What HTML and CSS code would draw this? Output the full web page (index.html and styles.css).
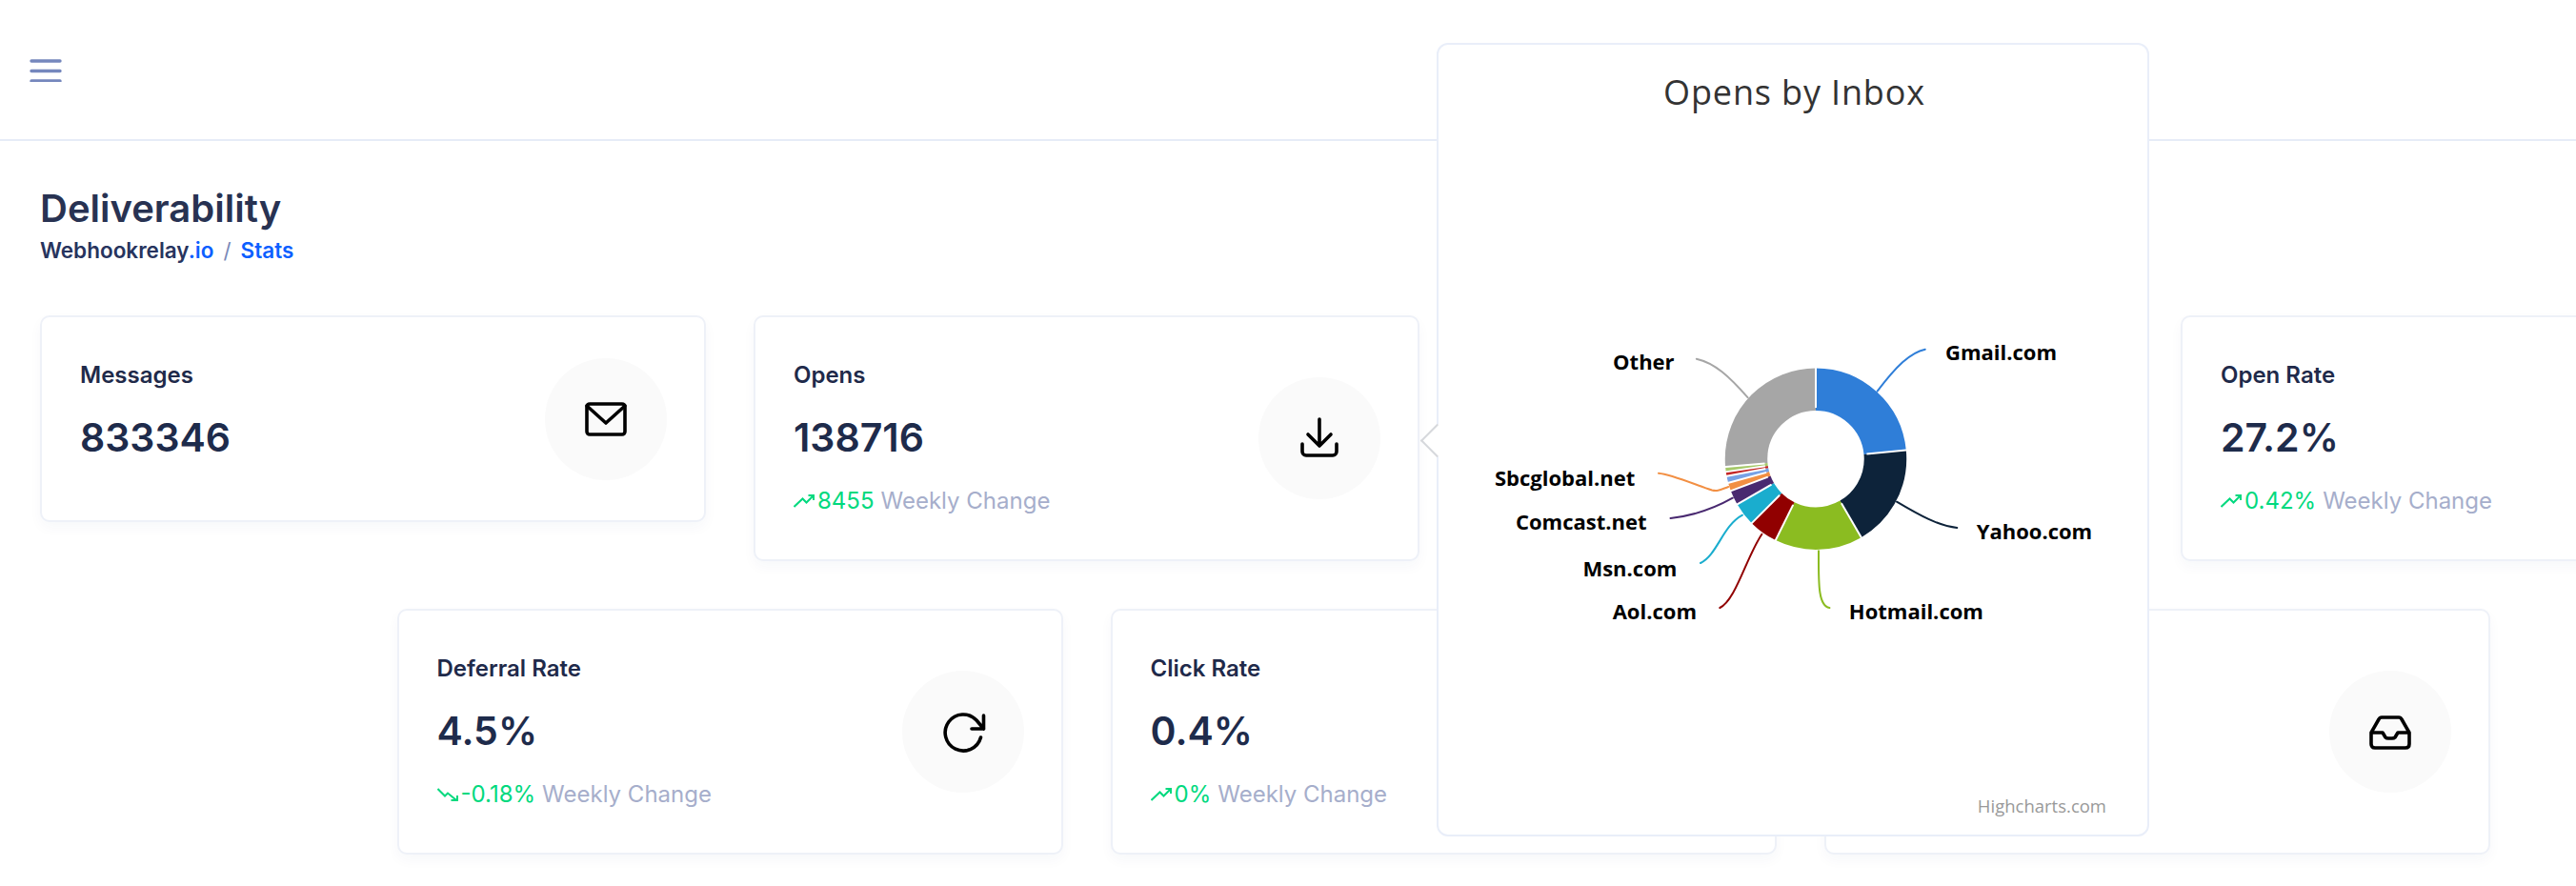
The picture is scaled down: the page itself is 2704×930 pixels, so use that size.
FILE: index.html
```html
<!DOCTYPE html>
<html lang="en">
<head>
<meta charset="utf-8">
<title>Deliverability</title>
<link rel="stylesheet" href="styles.css">
</head>
<body>
<header class="topbar">
  <svg class="menu" viewBox="0 0 34 24"><path d="M2 2H32M2 12.500H32M2 23H32"/></svg>
</header>
<main class="page">
  <h1 class="title">Deliverability</h1>
  <nav class="crumbs"><span class="crumb-dark">Webhookrelay<span class="crumb-blue">.io</span></span><span class="crumb-sep">/</span><span class="crumb-blue">Stats</span></nav>
  <section class="cards">
    <article class="card">
      <div class="body">
        <div class="label">Messages</div>
        <div class="value">833346</div>
      </div>
      <div class="disc"><svg class="ico" viewBox="0 0 48 48"><rect x="4" y="8" width="40" height="32" rx="3"/><path d="M4 10L24 28L44 10"/></svg></div>
    </article>
    <article class="card">
      <div class="body">
        <div class="label">Opens</div>
        <div class="value">138716</div>
        <div class="change"><svg class="trend" viewBox="0 0 22 14"><path d="M.5 13L9.500 4.500L13.500 8.500L20.500 1.500M15.500 1H21V6"/></svg><span class="delta">8455</span><span class="note">Weekly Change</span></div>
      </div>
      <div class="disc"><svg class="ico" viewBox="0 0 48 48"><path d="M24 4V32M12 20L24 32L36 20M6 30V38A4 4 0 0 0 10 42H38A4 4 0 0 0 42 38V30"/></svg></div>
    </article>
    <article class="card card-tall" aria-hidden="true"></article>
    <article class="card">
      <div class="body">
        <div class="label">Open Rate</div>
        <div class="value">27.2%</div>
        <div class="change"><svg class="trend" viewBox="0 0 22 14"><path d="M.5 13L9.500 4.500L13.500 8.500L20.500 1.500M15.500 1H21V6"/></svg><span class="delta">0.42%</span><span class="note">Weekly Change</span></div>
      </div>
    </article>
    <article class="card">
      <div class="body">
        <div class="label">Deferral Rate</div>
        <div class="value">4.5%</div>
        <div class="change"><svg class="trend" viewBox="0 0 22 14"><path d="M.5 1L8 8.500L11 5.500L19.500 12.500M14.500 13H21V8"/></svg><span class="delta">-0.18%</span><span class="note">Weekly Change</span></div>
      </div>
      <div class="disc"><svg class="ico" viewBox="0 0 48 48"><path d="M42.500 30A19 19 0 1 1 38 12L45.500 21M45.500 7V21H33"/></svg></div>
    </article>
    <article class="card">
      <div class="body">
        <div class="label">Click Rate</div>
        <div class="value">0.4%</div>
        <div class="change"><svg class="trend" viewBox="0 0 22 14"><path d="M.5 13L9.500 4.500L13.500 8.500L20.500 1.500M15.500 1H21V6"/></svg><span class="delta">0%</span><span class="note">Weekly Change</span></div>
      </div>
    </article>
    <article class="card card-end">
      <div class="disc"><svg class="ico" viewBox="0 0 48 48"><path d="M4 25L12 11Q13 9 15 9H33Q35 9 36 11L44 25V37Q44 41 40 41H8Q4 41 4 37ZM4 25H16L19 30Q20 31 22 31H26Q28 31 29 30L32 25H44"/></svg></div>
    </article>
  </section>
</main>
<aside class="popover">
  <svg class="chart" viewBox="1510 47 744 829">
    <text class="chart-title" x="1883.500" y="110">Opens by Inbox</text>
    <g class="links">
      <path class="c1" d="M1970.600 410.700C1990 385 2005 370 2020.800 366.700"/>
      <path class="c2" d="M1991 526.700C2015 541 2035 552 2054.300 554"/>
      <path class="c3" d="M1909 578.300C1909 610 1908 636 1920.400 638"/>
      <path class="c4" d="M1849.400 560.700C1833 585 1822 630 1805.300 638"/>
      <path class="c5" d="M1829 540.700C1808 552 1803 582 1785 591"/>
      <path class="c6" d="M1818.800 522.700C1797 535 1772 542 1753.500 544"/>
      <path class="c7" d="M1814.300 511C1806 514 1803 516 1797 514.500C1780 509 1755 498 1741 496.700"/>
      <path class="c8" d="M1834.700 417.300C1815 395 1800 381 1780.800 376.700"/>
    </g>
    <g class="ring" transform="rotate(-90 1906 481.700)">
      <circle class="c1" cx="1906" cy="481.700" r="73" pathLength="360" stroke-dasharray="84.500 360" stroke-dashoffset="0"/>
      <circle class="c2" cx="1906" cy="481.700" r="73" pathLength="360" stroke-dasharray="65.400 360" stroke-dashoffset="-84.500"/>
      <circle class="c3" cx="1906" cy="481.700" r="73" pathLength="360" stroke-dasharray="56.400 360" stroke-dashoffset="-149.900"/>
      <circle class="c4" cx="1906" cy="481.700" r="73" pathLength="360" stroke-dasharray="18.600 360" stroke-dashoffset="-206.300"/>
      <circle class="c5" cx="1906" cy="481.700" r="73" pathLength="360" stroke-dasharray="15.100 360" stroke-dashoffset="-224.900"/>
      <circle class="c6" cx="1906" cy="481.700" r="73" pathLength="360" stroke-dasharray="9.400 360" stroke-dashoffset="-240"/>
      <circle class="c7" cx="1906" cy="481.700" r="73" pathLength="360" stroke-dasharray="5.300 360" stroke-dashoffset="-249.400"/>
      <circle class="c9" cx="1906" cy="481.700" r="73" pathLength="360" stroke-dasharray="4.300 360" stroke-dashoffset="-254.700"/>
      <circle class="c10" cx="1906" cy="481.700" r="73" pathLength="360" stroke-dasharray="2.800 360" stroke-dashoffset="-259"/>
      <circle class="c11" cx="1906" cy="481.700" r="73" pathLength="360" stroke-dasharray="3.200 360" stroke-dashoffset="-261.800"/>
      <circle class="c8" cx="1906" cy="481.700" r="73" pathLength="360" stroke-dasharray="95 360" stroke-dashoffset="-265"/>
    </g>
    <g class="seams">
      <line x1="1906" y1="428" x2="1906" y2="384" transform="rotate(0 1906 481.700)"/>
      <line x1="1906" y1="428" x2="1906" y2="384" transform="rotate(84.500 1906 481.700)"/>
      <line x1="1906" y1="428" x2="1906" y2="384" transform="rotate(149.900 1906 481.700)"/>
      <line x1="1906" y1="428" x2="1906" y2="384" transform="rotate(206.300 1906 481.700)"/>
      <line x1="1906" y1="428" x2="1906" y2="384" transform="rotate(224.900 1906 481.700)"/>
      <line x1="1906" y1="428" x2="1906" y2="384" transform="rotate(240 1906 481.700)"/>
      <line x1="1906" y1="428" x2="1906" y2="384" transform="rotate(249.400 1906 481.700)"/>
      <line x1="1906" y1="428" x2="1906" y2="384" transform="rotate(254.700 1906 481.700)"/>
      <line x1="1906" y1="428" x2="1906" y2="384" transform="rotate(259 1906 481.700)"/>
      <line x1="1906" y1="428" x2="1906" y2="384" transform="rotate(261.800 1906 481.700)"/>
      <line x1="1906" y1="428" x2="1906" y2="384" transform="rotate(265 1906 481.700)"/>
    </g>
    <g class="labels">
      <text x="2042" y="377.500">Gmail.com</text>
      <text x="2074.700" y="565.500">Yahoo.com</text>
      <text x="1940.800" y="650">Hotmail.com</text>
      <text class="end" x="1781" y="650">Aol.com</text>
      <text class="end" x="1760.400" y="604.500">Msn.com</text>
      <text class="end" x="1728.600" y="556">Comcast.net</text>
      <text class="end" x="1716.300" y="510">Sbcglobal.net</text>
      <text class="end" x="1757.600" y="388">Other</text>
    </g>
    <text class="credit" x="2211" y="852.500">Highcharts.com</text>
  </svg>
</aside>
</body>
</html>
```

FILE: styles.css
```css
* { box-sizing: border-box; }

html, body {
  margin: 0;
  height: 100%;
  overflow: hidden;
  background: #fff;
}

body {
  position: relative;
  font-family: Inter, "Liberation Sans", sans-serif;
}

.topbar {
  height: 148px;
  border-bottom: 2px solid #e6ecf7;
  display: flex;
  align-items: flex-start;
  padding: 62px 0 0 31px;
}

.menu {
  width: 34px;
  height: 24px;
  fill: none;
  stroke: #7587bd;
  stroke-width: 3.4;
  stroke-linecap: round;
}

.page {
  padding: 47px 0 0 42px;
  width: 3000px;
}

.title {
  margin: 0;
  font-size: 40px;
  line-height: 48px;
  font-weight: 600;
  color: #283252;
}

.crumbs {
  display: flex;
  margin-top: 4px;
  font-size: 22.500px;
  line-height: 32px;
  font-weight: 600;
}

.crumb-dark { color: #27345e; }
.crumb-blue { color: #0d5fff; }
.crumb-sep { color: #7a89b8; margin: 0 10px; font-weight: 400; }

.cards {
  display: flex;
  flex-wrap: wrap;
  justify-content: center;
  align-items: flex-start;
  gap: 50px;
  width: 2946px;
  margin-top: 52px;
}

.card {
  width: 699px;
  min-height: 217px;
  display: flex;
  align-items: center;
  justify-content: space-between;
  padding: 0 39px 0 40px;
  background: #fff;
  border: 2px solid #eef1f8;
  border-radius: 10px;
  box-shadow: 0 6px 14px rgba(30, 50, 100, .035);
}

.card-tall { height: 258px; }
.card-end { height: 258px; justify-content: flex-end; }

.body {
  align-self: flex-start;
  padding: 45px 0;
}

.label {
  font-size: 24px;
  line-height: 32px;
  font-weight: 600;
  color: #1f2a4a;
}

.value {
  margin-top: 25px;
  font-size: 41px;
  line-height: 48px;
  font-weight: 600;
  color: #1e2b4b;
}

.change {
  display: flex;
  align-items: center;
  margin-top: 27px;
  font-size: 24px;
  line-height: 32px;
  white-space: pre;
}

.trend {
  width: 22px;
  height: 14px;
  margin-right: 3px;
  fill: none;
  stroke: #00d97e;
  stroke-width: 2;
}

.delta { color: #00d97e; margin-right: 7px; }
.note { color: #a6aecb; }

.disc {
  width: 128px;
  height: 128px;
  flex: none;
  display: flex;
  align-items: center;
  justify-content: center;
  border-radius: 50%;
  background: #fafafa;
}

.ico {
  width: 48px;
  height: 48px;
  fill: none;
  stroke: #000;
  stroke-width: 3.6;
  stroke-linejoin: round;
  stroke-linecap: round;
}

.popover {
  position: absolute;
  left: 1508px;
  top: 45px;
  width: 748px;
  height: 833px;
  background: #fff;
  border: 2px solid #e9eef9;
  border-radius: 12px;
}

.popover::before {
  content: "";
  position: absolute;
  left: -14px;
  top: 403px;
  width: 23px;
  height: 23px;
  background: #fff;
  border-left: 2px solid #d6d8dc;
  border-bottom: 2px solid #d6d8dc;
  transform: rotate(45deg);
}

.chart {
  position: absolute;
  left: 0;
  top: 0;
  width: 744px;
  height: 829px;
  font-family: "Open Sans", "DejaVu Sans", sans-serif;
}

.chart-title {
  font-size: 36px;
  letter-spacing: .85px;
  fill: #333;
  text-anchor: middle;
}

.links path {
  fill: none;
  stroke-width: 2;
  stroke-linecap: round;
}

.ring circle {
  fill: none;
  stroke-width: 44.500;
}

.seams line {
  stroke: #fff;
  stroke-width: 2;
}

.labels text {
  font-size: 22px;
  font-weight: 700;
  fill: #000;
}

.labels .end { text-anchor: end; }

.credit {
  font-size: 18.500px;
  fill: #999;
  text-anchor: end;
}

.links .c1, .ring .c1 { stroke: #2f7ed8; }
.links .c2, .ring .c2 { stroke: #0d233a; }
.links .c3, .ring .c3 { stroke: #8bbc21; }
.links .c4, .ring .c4 { stroke: #910000; }
.links .c5, .ring .c5 { stroke: #1aadce; }
.links .c6, .ring .c6 { stroke: #492970; }
.links .c7, .ring .c7 { stroke: #f28f43; }
.links .c8, .ring .c8 { stroke: #a6a6a6; }
.ring .c9 { stroke: #77a1e5; }
.ring .c10 { stroke: #c42525; }
.ring .c11 { stroke: #a6c96a; }
```
